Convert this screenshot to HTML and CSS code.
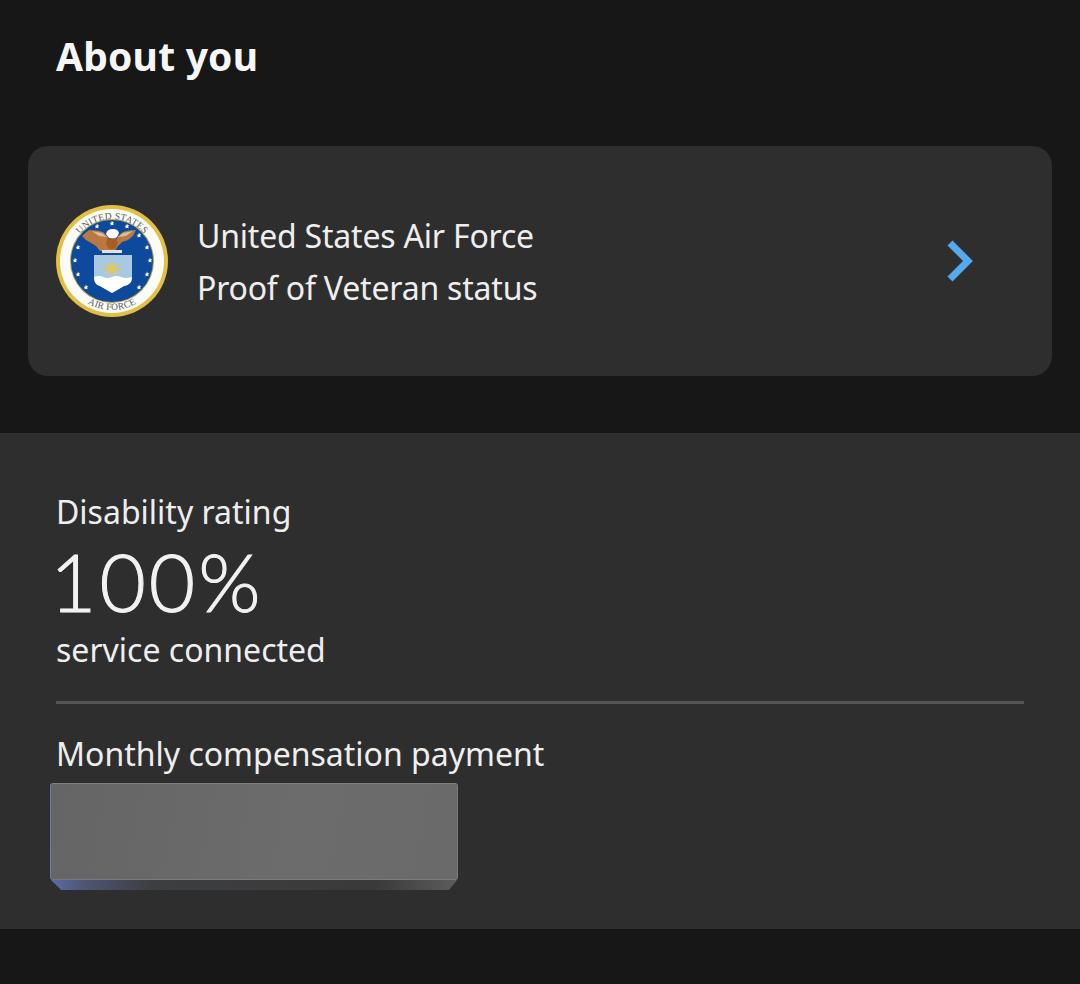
FILE: index.html
```html
<!DOCTYPE html>
<html lang="en">
<head>
<meta charset="utf-8">
<title>About you</title>
<link rel="stylesheet" href="styles.css">
</head>
<body>
<h1 class="title">About you</h1>
<a class="card">
  <svg class="seal" viewBox="0 0 112 112" width="112" height="112" aria-hidden="true">
    <defs>
      <path id="arcTop" d="M14 56a42 42 0 0 1 84 0"/>
      <path id="arcBottom" d="M7 56a49 49 0 0 0 98 0"/>
      <path id="star" d="M0-2.400l.7 1.700 1.700.1-1.300 1.100.5 1.700L0 1.700l-1.600.9.500-1.700-1.300-1.100 1.700-.1z"/>
    </defs>
    <circle cx="56" cy="56" r="56" fill="#e2c044"/>
    <circle cx="56" cy="56" r="52" fill="#fbfbf8"/>
    <circle cx="56" cy="56" r="42" fill="#b9a24a"/>
    <circle cx="56" cy="56" r="41" fill="#0d4a9b"/>
    <text class="seal-text"><textPath href="#arcTop" startOffset="50%" text-anchor="middle">UNITED STATES</textPath></text>
    <text class="seal-text"><textPath href="#arcBottom" startOffset="50%" text-anchor="middle">AIR FORCE</textPath></text>
    <g fill="#fff">
      <use href="#star" x="56" y="18"/><use href="#star" x="71" y="21"/><use href="#star" x="41" y="21"/>
      <use href="#star" x="83" y="30"/><use href="#star" x="30" y="30"/><use href="#star" x="91" y="42"/>
      <use href="#star" x="22" y="42"/><use href="#star" x="94" y="55"/><use href="#star" x="19" y="55"/>
      <use href="#star" x="91" y="69"/><use href="#star" x="22" y="69"/><use href="#star" x="83" y="82"/><use href="#star" x="30" y="82"/>
    </g>
    <path d="M33 25q9 0 14 2l4 4 3 6h5l3-6 5-4q5-2 13-2l-3 6-5 4-6 2-4 4-3 5h-15l-4-5-5-3-5-3-4-4z" fill="#ba7843"/>
    <path d="M36 26l10 2 5 4-8-1zM77 26l-10 2-5 4 8-1z" fill="#dcbb9b"/>
    <path d="M50 29q1-5 7-5 5 0 6 4l-2 4-3 2-5-1z" fill="#fff"/>
    <path d="M51 34l9-1 2 5-3 6h-6l-3-5z" fill="#a75d26"/>
    <path d="M46 45h20v3H46z" fill="#dfe3e8"/>
    <path d="M38 50h38v21q0 9-8 10l-12 7-12-7q-6-1-6-10z" fill="#a9c8e2"/>
    <path d="M38 72q5-2 9 0t9 0 9 0 11 0v0q0 8-8 9l-12 7-12-7q-6-1-6-9z" fill="#fff"/>
    <path d="M56 53l1.200 8 9-3-7.500 5 10.300 1-10.300 1 3 7-5.700-5.500-5.700 5.500 3-7-10.300-1 10.300-1-7.500-5 9 3z" fill="#e6c94e"/>
  </svg>
  <div class="card-text">
    <div>United States Air Force</div>
    <div>Proof of Veteran status</div>
  </div>
  <svg class="chevron" viewBox="0 0 27 42" width="27" height="42" aria-hidden="true">
    <path d="M3 3L21 21 3 39" fill="none" stroke="#55aaee" stroke-width="7"/>
  </svg>
</a>
<section class="panel">
  <div class="label">Disability rating</div>
  <div class="rating">100%</div>
  <div class="label">service connected</div>
  <hr class="divider">
  <div class="label">Monthly compensation payment</div>
  <div class="redaction"><div class="redaction-face"></div><div class="redaction-edge"></div></div>
</section>
</body>
</html>
```
FILE: styles.css
```css
html, body { margin: 0; padding: 0; }
body {
  width: 1080px;
  height: 984px;
  overflow: hidden;
  background: #171717;
  color: #f1f1f1;
  font-family: "Noto Sans", "Open Sans", sans-serif;
}
.title {
  margin: 0;
  padding: 30px 0 0 56px;
  height: 146px;
  box-sizing: border-box;
  font-size: 39px;
  line-height: 52px;
  font-weight: 700;
  letter-spacing: 0.2px;
  color: #f6f6f6;
}
.card {
  display: flex;
  align-items: center;
  height: 230px;
  margin: 0 28px;
  padding: 0 78px 0 28px;
  box-sizing: border-box;
  background: #2e2e2e;
  border-radius: 20px;
}
.seal { flex: none; margin-right: 29px; }
.seal-text { font-family: "Liberation Serif", serif; font-size: 9.500px; fill: #5a5a5a; letter-spacing: 0.2px; }
.card-text {
  flex: 1;
  padding-top: 2px;
  font-size: 32px;
  line-height: 52px;
  letter-spacing: -0.2px;
  color: #eeeeee;
}
.chevron { flex: none; }
.panel {
  margin-top: 57px;
  height: 496px;
  box-sizing: border-box;
  padding: 56px 56px 0;
  background: #2e2e2e;
}
.label {
  font-size: 32px;
  line-height: 46px;
  letter-spacing: 0;
  color: #eeeeee;
}
.rating {
  font-family: Lato, sans-serif;
  font-size: 80px;
  line-height: 92px;
  font-weight: 300;
  letter-spacing: 3px;
  -webkit-text-stroke: 1px #f2f2f2;
  color: #f2f2f2;
  margin-left: -6px;
}
.divider {
  margin: 28px 0 27px;
  height: 3px;
  border: 0;
  background: #565656;
}
.redaction { margin: 6px 0 0 -6px; width: 408px; }
.redaction-face {
  height: 97px;
  box-sizing: border-box;
  background: linear-gradient(100deg, #656566, #6c6c6d 60%, #6a6a6b);
  border: 1px solid #7a7a7a;
  border-left-color: #6d7cb0;
  border-top-color: #808080;
  border-radius: 3px;
}
.redaction-edge {
  height: 10px;
  margin: 0 1px;
  background: linear-gradient(90deg, #5a6ca8 0, #4d5674 8%, #3d3e40 25%, #3a3a3a 80%, #5c5c5c 100%);
  clip-path: polygon(0 0, 100% 0, 98% 100%, 2.500% 100%);
}
```
